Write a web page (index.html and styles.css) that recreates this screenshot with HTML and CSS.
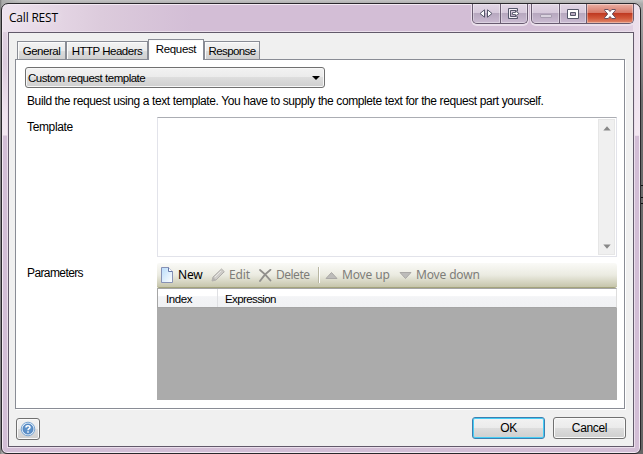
FILE: index.html
```html
<!DOCTYPE html>
<html lang="en">
<head>
<meta charset="utf-8">
<title>Call REST</title>
<link rel="stylesheet" href="styles.css">
</head>
<body>
<div class="window">
  <header class="titlebar">
    <h1 class="title">Call REST</h1>
    <div class="caption-group extra">
      <span class="cap"><svg width="14" height="9" viewBox="0 0 14 9"><path d="M5.500.8v7.400L1 4.500zM8.500.8v7.400L13 4.500z" fill="#fff" stroke="#55576a"/></svg></span>
      <span class="cap"><svg width="13" height="12" viewBox="0 0 13 12"><path d="M10.500 3.500v-3h-9v10h9v-2M9.500 2.500h-6v6h6" fill="none" stroke="#55576a"/><path d="M2.500 1.500h7M2.500 1.500v8h7" fill="none" stroke="#f4eef6"/><path d="M5.500 4.500h3V3l3.500 2.500L8.500 8V6.500h-3z" fill="#fff" stroke="#55576a" stroke-width=".9"/></svg></span>
    </div>
    <div class="caption-group main">
      <span class="cap min"><svg width="12" height="4" viewBox="0 0 12 4"><rect x=".5" y=".5" width="11" height="3" rx=".5" fill="#d9d2de" stroke="#a69caf"/></svg></span>
      <span class="cap max"><svg width="12" height="10" viewBox="0 0 12 10"><path d="M.5.5h11v9H.5zM3.500 3.500v3h5v-3z" fill="#fff" fill-rule="evenodd" stroke="#55576a"/></svg></span>
      <span class="cap close"><svg width="12" height="10" viewBox="0 0 12 10"><path d="M.7.5h3.500L6 2.500 7.800.5h3.500v1L8.300 5l3 3.500v1H7.800L6 7.500l-1.800 2H.7v-1l3-3.500-3-3.500z" fill="#fff" stroke="#5a4658" stroke-width=".9"/></svg></span>
    </div>
  </header>
  <main class="client">
    <nav class="tabs">
      <span class="tab general">General</span>
      <span class="tab headers">HTTP Headers</span>
      <span class="tab request">Request</span>
      <span class="tab response">Response</span>
    </nav>
    <section class="page">
      <div class="combo"><span>Custom request template</span><svg width="8" height="4" viewBox="0 0 8 4"><path d="M0 0h8L4 4z"/></svg></div>
      <p class="description">Build the request using a text template. You have to supply the complete text for the request part yourself.</p>
      <div class="row template-row">
        <span class="label">Template</span>
        <div class="textarea">
          <div class="scrollbar">
            <svg width="8" height="5" viewBox="0 0 8 5"><path d="M4 .3L7.700 4.500H.3z" fill="#888"/></svg>
            <svg width="8" height="5" viewBox="0 0 8 5"><path d="M4 4.700L.3.500h7.400z" fill="#888"/></svg>
          </div>
        </div>
      </div>
      <div class="row">
        <span class="label parameters">Parameters</span>
        <div class="params">
          <div class="toolbar">
            <span class="tool new"><svg width="12" height="16" viewBox="0 0 12 16"><defs><linearGradient id="paper" x2="1" y2="1"><stop stop-color="#b9dcfb"/><stop offset="1" stop-color="#fff"/></linearGradient></defs><path d="M.5.5h7l4 4v11H.5z" fill="url(#paper)" stroke="#8791b5"/><path d="M7.500.5v4h4" fill="#fff" stroke="#6679a9"/></svg>New</span>
            <span class="tool edit"><svg width="14" height="14" viewBox="0 0 14 14"><path d="M1 13l1-4 8.500-8 2.800 2.700L5 12z" fill="#cfcdc9" stroke="#b0aeab"/><path d="M1 13l1-4 3 3z" fill="#b5b3b0"/><path d="M4 9l6-6" stroke="#e8e7e5"/></svg>Edit</span>
            <span class="tool delete"><svg width="13" height="13" viewBox="0 0 13 13"><path d="M1 1c4 3 7 6 10.500 10.500M11.500.8C7 4 3.500 8 1 12" fill="none" stroke="#918f8c" stroke-width="1.800" stroke-linecap="round"/></svg>Delete</span>
            <span class="separator"></span>
            <span class="tool up"><svg width="13" height="7" viewBox="0 0 13 7"><path d="M6.500.5l5.500 6H1z" fill="#bdbcba" stroke="#aaa8a6"/></svg>Move up</span>
            <span class="tool down"><svg width="13" height="7" viewBox="0 0 13 7"><path d="M1 .5h11l-5.500 6z" fill="#bdbcba" stroke="#aaa8a6"/></svg>Move down</span>
          </div>
          <div class="grid-head"><span class="col index">Index</span><span class="col expression">Expression</span></div>
          <div class="grid-body"></div>
        </div>
      </div>
    </section>
    <footer class="footer">
      <span class="help"><svg width="16" height="16" viewBox="0 0 16 16"><circle cx="8" cy="8" r="6.800" fill="#dcebf8" stroke="#7ba6d3"/><circle cx="8" cy="8" r="5" fill="#5d91c9" stroke="#4379b7" stroke-width=".8"/><path d="M6 6.500C6 4.300 10 4.300 10 6.400 10 7.700 8 7.700 8 9.200M8 10.200v1.500" fill="none" stroke="#fff" stroke-width="1.500"/></svg></span>
      <span class="button ok">OK</span>
      <span class="button cancel">Cancel</span>
    </footer>
  </main>
</div>
<div class="backdrop-mark"></div>
</body>
</html>
```
FILE: styles.css
```css
* { box-sizing: border-box; }
body {
  margin: 0;
  width: 643px;
  height: 454px;
  padding: 3px 3px 0 1px;
  overflow: hidden;
  position: relative;
  background: linear-gradient(90deg, #777 0, #aaa 2px, transparent 20px), linear-gradient(#c4c4c4 0, #aaa 4px, #6d6d6d 100px, #656565);
  font: 11.500px/14px "Liberation Sans", Arial, sans-serif;
  letter-spacing: -.35px;
  color: #000;
  white-space: nowrap;
}
svg { display: block; flex: none; }
.window {
  width: 640px;
  height: 451px;
  border: 1px solid #29272b;
  border-radius: 7px 7px 6px 6px;
  padding: 0 6px;
  background:
    linear-gradient(#eadfeb, #f0e4ef 100px, #f3e7f1 131px, transparent 132px) right / 7px 100% no-repeat,
    linear-gradient(90deg, #eee2ee, #dccbdc 100px, #d3bed6 190px, #d3bed6 540px, #e1d1e2) top / 100% 28px no-repeat,
    linear-gradient(#e2d3e3, #dccbdd 60px, #f0e3ef 110px, #f3e7f1 131px, #d3bed6 132px);
  box-shadow: inset 0 0 0 1px #f4eaf4;
}
.titlebar { height: 28px; display: flex; align-items: flex-start; }
.title {
  margin: 5px auto 0 1px;
  font: 12px/17px "Open Sans", sans-serif;
  letter-spacing: -.2px;
  text-shadow: 0 0 8px #fff;
}
.caption-group {
  height: 20px;
  display: flex;
  border: 1px solid #685b70;
  border-top: 0;
  border-radius: 0 0 5px 5px;
  box-shadow: 0 1px 0 1px #eadfeb;
  overflow: hidden;
  background: linear-gradient(#e2d6e5 0, #d6c9db 47%, #b7a8bf 50%, #cbbbd2);
}
.extra { width: 56px; margin-right: 3px; }
.main { width: 103px; }
.cap { flex: 1; display: flex; align-items: center; justify-content: center; box-shadow: inset 0 0 0 1px rgba(255,255,255,.35); }
.cap + .cap { border-left: 1px solid #685b70; }
.cap.min, .cap.max { flex: none; width: 28px; }
.cap.min { width: 27px; }
.cap.max { width: 27px; }
.cap.min svg { margin-top: 5px; }
.cap.close { background: linear-gradient(#eab0a5, #d77867 47%, #c03a22 50%, #d2583a 75%, #e28a6e); }
.client {
  width: 626px;
  height: 415px;
  border: 1px solid #62596a;
  background: #f0f0f0;
  padding: 6px 7px 0 6px;
  box-shadow: 0 0 0 1px #eadeeb;
}
.tabs { height: 20px; display: flex; align-items: flex-end; padding-left: 2px; position: relative; }
.tab {
  height: 18px;
  border: 1px solid #898c95;
  border-bottom: 0;
  background: linear-gradient(#f3f3f3, #ebebeb 50%, #dddddd 51%, #cfcfcf);
  box-shadow: inset 1px 1px #fbfbfb;
  text-align: center;
  line-height: 19px;
}
.general { width: 49px; letter-spacing: -.5px; }
.headers { width: 82px; letter-spacing: -.5px; }
.request { width: 56px; height: 21px; margin-bottom: -1px; background: #fff; line-height: 19px; }
.response { width: 56px; letter-spacing: -.6px; }
.page {
  width: 610px;
  height: 350px;
  border: 1px solid #898c95;
  background: #fff;
  padding: 7px 7px 0 9px;
  box-shadow: 1px 1px #fff;
}
.combo {
  width: 300px;
  height: 21px;
  border: 1px solid #707070;
  border-radius: 3px;
  box-shadow: inset 0 0 0 1px #f7f7f7;
  background: linear-gradient(#f2f2f2, #ebebeb 49%, #ddd 50%, #cfcfcf);
  display: flex;
  align-items: center;
  justify-content: space-between;
  padding: 0 4px 0 2px;
  letter-spacing: -.49px;
}
.description { margin: 6px 0 9px 2px; font-size: 12px; line-height: 14px; letter-spacing: -.4px; }
.row { display: flex; }
.label { width: 132px; padding: 3px 0 0 2px; font-size: 12px; }
.parameters { letter-spacing: -.6px; }
.textarea {
  width: 460px;
  height: 140px;
  border: 1px solid #e2e3ea;
  border-top-color: #abadb3;
  padding: 1px;
  display: flex;
  justify-content: flex-end;
}
.scrollbar {
  width: 17px;
  background: #f0f0f0;
  border: 1px solid #e6e6e6;
  display: flex;
  flex-direction: column;
  justify-content: space-between;
  align-items: center;
  padding: 6px 0 5px;
}
.template-row { margin-bottom: 6px; }
.params { width: 460px; }
.toolbar {
  height: 25px;
  border-radius: 2px 3px 3px 2px;
  background: linear-gradient(#fafaf7, #ebebe1 50%, #c6c5ab);
  border-bottom: 1px solid #a3a37c;
  display: flex;
  align-items: center;
  font: 12px/16px "Noto Sans", sans-serif;
  letter-spacing: -.15px;
  color: #7e7d79;
}
.tool { display: flex; align-items: center; gap: 4px; }
.new { width: 50px; margin-left: 4px; gap: 5px; color: #000; }
.edit { width: 48px; }
.delete { width: 59px; letter-spacing: -.5px; }
.separator { width: 2px; height: 16px; background: #b9b7a3; border-right: 1px solid #fff; }
.up { width: 74px; margin-left: 5px; }
.down { width: 90px; }
.grid-head {
  height: 20px;
  display: flex;
  border: 1px solid #a5a5a5;
  border-right-color: #ddd;
  background: linear-gradient(#fff 40%, #f3f4f6 42%, #f1f2f4);
  line-height: 20px;
  letter-spacing: -.6px;
}
.col.index { width: 60px; padding-left: 8px; border-right: 1px solid #dfe0e3; letter-spacing: -.4px; }
.col.expression { padding-left: 7px; }
.grid-body { height: 92px; background: #ababab; }
.footer { display: flex; align-items: center; height: 39px; }
.help, .button {
  height: 22px;
  border: 1px solid #707070;
  border-radius: 3px;
  box-shadow: inset 0 0 0 1px #fafafa;
  background: linear-gradient(#f2f2f2, #ebebeb 49%, #ddd 50%, #cfcfcf);
  display: flex;
  align-items: center;
  justify-content: center;
}
.help { width: 24px; margin: 0 auto 0 1px; }
.button { width: 73px; font-size: 12px; margin-top: -1px; }
.ok { margin-right: 8px; border-color: #3c7fb1; box-shadow: inset 0 0 0 1px #46cdf5; }
.backdrop-mark { position: absolute; right: 0; top: 185px; width: 2px; height: 19px; border: solid #111; border-width: 1px 0; background: linear-gradient(transparent 11px, #111 11px, #111 12px, transparent 12px); }
```
